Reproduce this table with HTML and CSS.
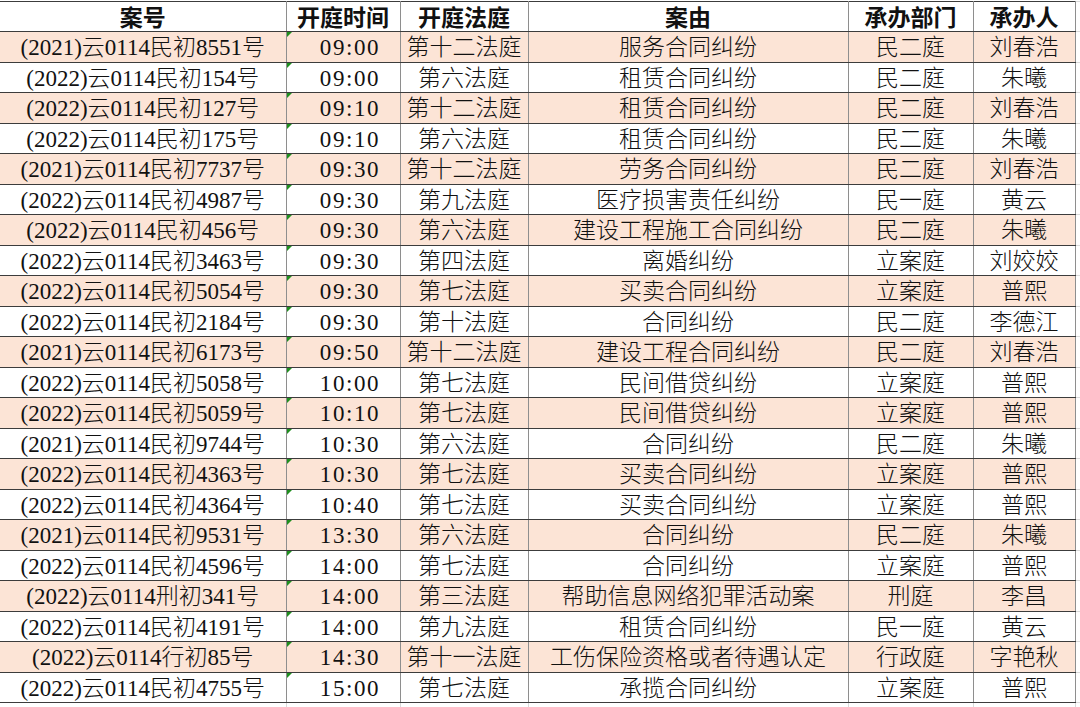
FILE: index.html
```html
<!DOCTYPE html>
<html lang="zh-CN">
<head>
<meta charset="utf-8">
<title>开庭公告</title>
<link rel="stylesheet" href="styles.css">
</head>
<body>
<table class="sheet">
  <colgroup>
    <col class="c-no"><col class="c-time"><col class="c-room"><col class="c-cause"><col class="c-dept"><col class="c-judge"><col class="c-fill">
  </colgroup>
  <thead>
    <tr class="head">
      <th>案号</th><th>开庭时间</th><th>开庭法庭</th><th>案由</th><th>承办部门</th><th>承办人</th><th class="fill"></th>
    </tr>
  </thead>
  <tbody>
    <tr class="pink"><td>(2021)云0114民初8551号</td><td class="time">09:00</td><td>第十二法庭</td><td>服务合同纠纷</td><td>民二庭</td><td>刘春浩</td><td class="fill"></td></tr>
    <tr><td>(2022)云0114民初154号</td><td class="time">09:00</td><td>第六法庭</td><td>租赁合同纠纷</td><td>民二庭</td><td>朱曦</td><td class="fill"></td></tr>
    <tr class="pink"><td>(2022)云0114民初127号</td><td class="time">09:10</td><td>第十二法庭</td><td>租赁合同纠纷</td><td>民二庭</td><td>刘春浩</td><td class="fill"></td></tr>
    <tr><td>(2022)云0114民初175号</td><td class="time">09:10</td><td>第六法庭</td><td>租赁合同纠纷</td><td>民二庭</td><td>朱曦</td><td class="fill"></td></tr>
    <tr class="pink"><td>(2021)云0114民初7737号</td><td class="time">09:30</td><td>第十二法庭</td><td>劳务合同纠纷</td><td>民二庭</td><td>刘春浩</td><td class="fill"></td></tr>
    <tr><td>(2022)云0114民初4987号</td><td class="time">09:30</td><td>第九法庭</td><td>医疗损害责任纠纷</td><td>民一庭</td><td>黄云</td><td class="fill"></td></tr>
    <tr class="pink"><td>(2022)云0114民初456号</td><td class="time">09:30</td><td>第六法庭</td><td>建设工程施工合同纠纷</td><td>民二庭</td><td>朱曦</td><td class="fill"></td></tr>
    <tr><td>(2022)云0114民初3463号</td><td class="time">09:30</td><td>第四法庭</td><td>离婚纠纷</td><td>立案庭</td><td>刘姣姣</td><td class="fill"></td></tr>
    <tr class="pink"><td>(2022)云0114民初5054号</td><td class="time">09:30</td><td>第七法庭</td><td>买卖合同纠纷</td><td>立案庭</td><td>普熙</td><td class="fill"></td></tr>
    <tr><td>(2022)云0114民初2184号</td><td class="time">09:30</td><td>第十法庭</td><td>合同纠纷</td><td>民二庭</td><td>李德江</td><td class="fill"></td></tr>
    <tr class="pink"><td>(2021)云0114民初6173号</td><td class="time">09:50</td><td>第十二法庭</td><td>建设工程合同纠纷</td><td>民二庭</td><td>刘春浩</td><td class="fill"></td></tr>
    <tr><td>(2022)云0114民初5058号</td><td class="time">10:00</td><td>第七法庭</td><td>民间借贷纠纷</td><td>立案庭</td><td>普熙</td><td class="fill"></td></tr>
    <tr class="pink"><td>(2022)云0114民初5059号</td><td class="time">10:10</td><td>第七法庭</td><td>民间借贷纠纷</td><td>立案庭</td><td>普熙</td><td class="fill"></td></tr>
    <tr><td>(2021)云0114民初9744号</td><td class="time">10:30</td><td>第六法庭</td><td>合同纠纷</td><td>民二庭</td><td>朱曦</td><td class="fill"></td></tr>
    <tr class="pink"><td>(2022)云0114民初4363号</td><td class="time">10:30</td><td>第七法庭</td><td>买卖合同纠纷</td><td>立案庭</td><td>普熙</td><td class="fill"></td></tr>
    <tr><td>(2022)云0114民初4364号</td><td class="time">10:40</td><td>第七法庭</td><td>买卖合同纠纷</td><td>立案庭</td><td>普熙</td><td class="fill"></td></tr>
    <tr class="pink"><td>(2021)云0114民初9531号</td><td class="time">13:30</td><td>第六法庭</td><td>合同纠纷</td><td>民二庭</td><td>朱曦</td><td class="fill"></td></tr>
    <tr><td>(2022)云0114民初4596号</td><td class="time">14:00</td><td>第七法庭</td><td>合同纠纷</td><td>立案庭</td><td>普熙</td><td class="fill"></td></tr>
    <tr class="pink"><td>(2022)云0114刑初341号</td><td class="time">14:00</td><td>第三法庭</td><td>帮助信息网络犯罪活动案</td><td>刑庭</td><td>李昌</td><td class="fill"></td></tr>
    <tr><td>(2022)云0114民初4191号</td><td class="time">14:00</td><td>第九法庭</td><td>租赁合同纠纷</td><td>民一庭</td><td>黄云</td><td class="fill"></td></tr>
    <tr class="pink"><td>(2022)云0114行初85号</td><td class="time">14:30</td><td>第十一法庭</td><td>工伤保险资格或者待遇认定</td><td>行政庭</td><td>字艳秋</td><td class="fill"></td></tr>
    <tr><td>(2022)云0114民初4755号</td><td class="time">15:00</td><td>第七法庭</td><td>承揽合同纠纷</td><td>立案庭</td><td>普熙</td><td class="fill"></td></tr>
    <tr class="blank"><td></td><td></td><td></td><td></td><td></td><td></td><td class="fill"></td></tr>
  </tbody>
</table>
</body>
</html>
```

FILE: styles.css
```css
html, body {
  margin: 0;
  padding: 0;
  background: #ffffff;
}

body {
  padding-top: 1px;
  overflow: hidden;
}

.sheet {
  border-collapse: collapse;
  table-layout: fixed;
  width: 1080px;
  font-family: "Liberation Serif", "Noto Sans CJK SC", serif;
  font-size: 23px;
  color: #111111;
}

.c-no { width: 286px; }
.c-time { width: 114px; }
.c-room { width: 128px; }
.c-cause { width: 320px; }
.c-dept { width: 125px; }
.c-judge { width: 102px; }
.c-fill { width: 5px; }

.sheet th,
.sheet td {
  padding: 0;
  text-align: center;
  white-space: nowrap;
  overflow: hidden;
  border-left: 1px solid #8e8e8e;
  border-right: 1px solid #8e8e8e;
  border-top: 1px solid #3c3c3c;
  border-bottom: 1px solid #3c3c3c;
  vertical-align: middle;
}

.sheet th:first-child,
.sheet td:first-child {
  border-left: none;
}

.sheet th {
  font-weight: 700;
  height: 25px;
  line-height: 25px;
  padding-top: 4px;
}

.sheet td {
  font-weight: 300;
  height: 29.5px;
  line-height: 26px;
  padding-top: 3px;
  box-sizing: border-box;
}

.sheet tbody tr {
  height: 30.5px;
}

.sheet tr.pink td {
  background: #fce4d6;
}

.sheet .fill,
.sheet tr.pink td.fill {
  background: #ffffff;
  border-left: 1px solid #2a2a2a;
  border-right: none;
  border-top: 1px solid #d9d9d9;
  border-bottom: 1px solid #d9d9d9;
}

.sheet thead .fill {
  border-top: 1px solid #d9d9d9;
}

.sheet td.time {
  position: relative;
  padding-left: 14px;
  letter-spacing: 1.6px;
}

.sheet td.time::before {
  content: "";
  position: absolute;
  left: 0;
  top: 0;
  width: 0;
  height: 0;
  border-top: 5px solid #1f8f1f;
  border-right: 5px solid transparent;
}

.sheet tr.blank td {
  background: #ffffff;
  border-top: 1px solid #2a2a2a;
  border-bottom: none;
  border-left: 1px solid #d9d9d9;
  border-right: 1px solid #d9d9d9;
}

.sheet tr.blank td:first-child {
  border-left: none;
}

.sheet tr.blank td.fill {
  border-top: 1px solid #d9d9d9;
}
```
